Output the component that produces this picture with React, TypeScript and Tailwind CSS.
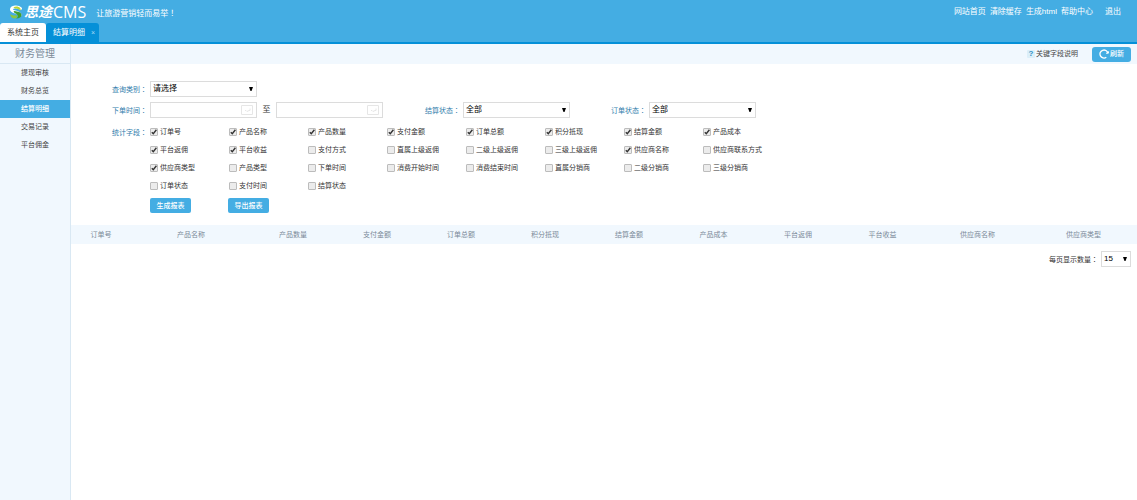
import { useState } from 'react'
import type { ReactNode } from 'react'

const topLinks = ['网站首页', '清除缓存', '生成html', '帮助中心']

const menu = ['提现审核', '财务总览', '结算明细', '交易记录', '平台佣金']

const fields: [string, boolean][] = [
    ['订单号', true],
    ['产品名称', true],
    ['产品数量', true],
    ['支付金额', true],
    ['订单总额', true],
    ['积分抵现', true],
    ['结算金额', true],
    ['产品成本', true],
    ['平台返佣', true],
    ['平台收益', true],
    ['支付方式', false],
    ['直属上级返佣', false],
    ['二级上级返佣', false],
    ['三级上级返佣', false],
    ['供应商名称', true],
    ['供应商联系方式', false],
    ['供应商类型', true],
    ['产品类型', false],
    ['下单时间', false],
    ['消费开始时间', false],
    ['消费结束时间', false],
    ['直属分销商', false],
    ['二级分销商', false],
    ['三级分销商', false],
    ['订单状态', false],
    ['支付时间', false],
    ['结算状态', false],
]

const columns: [string, string][] = [
    ['订单号', 'w-[60px]'],
    ['产品名称', 'w-[120px]'],
    ['产品数量', 'w-[84px]'],
    ['支付金额', 'w-[84px]'],
    ['订单总额', 'w-[84px]'],
    ['积分抵现', 'w-[84px]'],
    ['结算金额', 'w-[84px]'],
    ['产品成本', 'w-[85px]'],
    ['平台返佣', 'w-[84px]'],
    ['平台收益', 'w-[85px]'],
    ['供应商名称', 'w-[105px]'],
    ['供应商类型', 'w-[107px]'],
]

function Logo() {
    return (
        <svg viewBox="0 0 28 28" className="size-3.5" fill="none" strokeLinecap="round" aria-hidden="true">
            <path d="M23 7C18 2 5 3 5 9c0 6 16 4 17 11" stroke="#fff" strokeWidth="6" />
            <path d="M22 6c-3-4-10-4-13-1 2 3 9 1 14 6 1-2 0-4-1-5z" fill="#b9d433" />
            <path d="M11 12c6 1 14 2 14 8 0 4-4 7-11 7 5-3 5-6 1-9-4-2-8-5-4-6z" fill="#3f9f2f" />
            <path d="M2 18c4 3 9 4 13 2 2 3 1 6-3 7-5 0-9-3-10-9z" fill="#8dc73f" />
        </svg>
    )
}

// full-width punctuation centred in its box
function Mark({ children }: { children: ReactNode }) {
    return <span className="font-['Noto_Sans_CJK_TC',sans-serif]" lang="zh-TW">{children}</span>
}

function Select({ id, options, className }: { id: string; options: string[]; className: string }) {
    return (
        <span className={`grid items-center ${className}`}>
            <select
                id={id}
                className="col-start-1 row-start-1 h-4 w-full appearance-none border border-[#dcdcdc] bg-white pl-0.5 pr-3 text-[8px] leading-[14px] text-black outline-none"
            >
                {options.map((o) => (
                    <option key={o}>{o}</option>
                ))}
            </select>
            <svg viewBox="0 0 4 4" className="pointer-events-none col-start-1 row-start-1 mr-1 size-1 justify-self-end" aria-hidden="true">
                <path d="M0 0h4L2.500 4h-1z" fill="#000" />
            </svg>
        </span>
    )
}

function DateInput({ id, label }: { id: string; label: string }) {
    return (
        <span className="flex h-4 w-[107px] items-center border border-[#dcdcdc] bg-white pr-[3px]">
            <input id={id} type="text" aria-label={label} className="h-full w-0 min-w-0 flex-1 px-[3px] text-[8px] outline-none" />
            <svg viewBox="0 0 12 10" className="h-2.5 w-3" fill="none" stroke="#e6e6e6" aria-hidden="true">
                <path d="M.5.5h11v9H.5zM4 5.500h1l1 1 2-1h1v-2" />
            </svg>
        </span>
    )
}

function Field({ name, initial }: { name: string; initial: boolean }) {
    const [on, setOn] = useState(initial)

    return (
        <label className="flex h-[18px] items-center gap-0.5 whitespace-nowrap">
            <span className="grid size-2 place-items-center">
                <input
                    type="checkbox"
                    checked={on}
                    onChange={(e) => setOn(e.target.checked)}
                    className="col-start-1 row-start-1 size-2 appearance-none rounded-[1px] border border-[#bcbcbc] bg-[#ececec]"
                />
                {on && (
                    <svg viewBox="0 0 8 8" className="pointer-events-none col-start-1 row-start-1 size-2" aria-hidden="true">
                        <path d="M1.800 4.200l1.500 1.500L6.400 1.800" fill="none" stroke="#333" strokeWidth="1.400" />
                    </svg>
                )}
            </span>
            {name}
        </label>
    )
}

function RowLabel({ htmlFor, children }: { htmlFor: string; children: ReactNode }) {
    return (
        <label htmlFor={htmlFor} className="w-[38px] shrink-0 whitespace-nowrap text-[#2f7cab]">
            {children}<Mark>：</Mark>
        </label>
    )
}

export default function App() {
    return (
        <div className="flex min-h-screen flex-col bg-white font-['Liberation_Sans','Noto_Sans_CJK_SC',sans-serif] text-[7px] leading-[10px] text-[#333]">
            {/* top bar */}
            <header className="border-b-2 border-[#0590d8] bg-[#44ade3] text-white">
                <div className="flex h-[23px] items-center pl-[9px] pr-4">
                    <Logo />
                    <span className="ml-px text-[14px] font-bold italic leading-5">思途</span>
                    <span className="ml-px font-['Open_Sans',sans-serif] text-[16px] leading-5">CMS</span>
                    <span className="ml-2.5 mt-1 text-[8px]">让旅游营销轻而易举<Mark>！</Mark></span>
                    <nav className="ml-auto flex gap-1 text-[8px]">
                        {topLinks.map((l) => (
                            <a key={l} href="#">{l}</a>
                        ))}
                        <a href="#" className="ml-2">退出</a>
                    </nav>
                </div>
                <div className="flex h-[19px] text-[8px]">
                    <a href="#" className="flex items-center rounded-t-[3px] bg-white px-[7px] text-[#333]">系统主页</a>
                    <div className="flex items-center gap-1.5 rounded-t-[3px] bg-[#0590d8] pl-[7px] pr-1">
                        <a href="#">结算明细</a>
                        <button type="button" aria-label="关闭" className="text-[7px] text-[#a5d8f5]">×</button>
                    </div>
                </div>
            </header>

            <div className="flex flex-1">
                {/* sidebar */}
                <aside className="w-[71px] shrink-0 border-r border-[#d9e8f3] bg-[#f1f8fe]">
                    <h2 className="flex h-5 items-center justify-center border-b border-[#d9e8f3] text-[10px] text-[#7b8a99]">财务管理</h2>
                    <nav>
                        {menu.map((m) => (
                            <a
                                key={m}
                                href="#"
                                className={`flex h-[18px] items-center justify-center ${m === '结算明细' ? 'bg-[#44ade3] font-medium text-white' : 'text-[#444]'}`}
                            >
                                {m}
                            </a>
                        ))}
                    </nav>
                </aside>

                <main className="min-w-0 flex-1">
                    <div className="flex h-5 items-center justify-end gap-3.5 bg-[#f1f8fe] pr-1.5">
                        <a href="#" className="flex items-center gap-px text-[#444]">
                            <span className="flex size-2 items-center justify-center rounded-[1px] bg-[#dceff9] text-[8px] font-bold text-[#2f8fc4]">?</span>
                            关键字段说明
                        </a>
                        <button type="button" className="flex h-[15px] w-[39px] items-center justify-center gap-px rounded-[3px] bg-[#44ade3] font-medium text-white">
                            <svg viewBox="0 0 10 10" className="size-2.5" fill="none" stroke="#fff" strokeWidth="1.300" aria-hidden="true">
                                <path d="M8.900 4.200A4 4 0 1 0 7.300 8.300" />
                                <path d="M7 4.200h2.400V2.300" strokeWidth="1" />
                            </svg>
                            刷新
                        </button>
                    </div>

                    {/* filters */}
                    <form className="flex flex-col pb-3 pl-[41px] pt-[17px]" onSubmit={(e) => e.preventDefault()}>
                        <div className="flex items-center">
                            <RowLabel htmlFor="kind">查询类别</RowLabel>
                            <Select id="kind" options={['请选择']} className="w-[107px]" />
                        </div>
                        <div className="mt-[5px] flex items-center">
                            <RowLabel htmlFor="start">下单时间</RowLabel>
                            <DateInput id="start" label="开始时间" />
                            <span className="w-[19px] text-center text-[8px]">至</span>
                            <DateInput id="end" label="结束时间" />
                            <span className="ml-[42px] flex items-center">
                                <RowLabel htmlFor="settle">结算状态</RowLabel>
                                <Select id="settle" options={['全部']} className="w-[107px]" />
                            </span>
                            <span className="ml-[41px] flex items-center">
                                <RowLabel htmlFor="order">订单状态</RowLabel>
                                <Select id="order" options={['全部']} className="w-[107px]" />
                            </span>
                        </div>
                        <fieldset className="mt-[5px] flex" aria-labelledby="stat">
                            <span id="stat" className="w-[38px] shrink-0 whitespace-nowrap leading-[18px] text-[#2f7cab]">统计字段<Mark>：</Mark></span>
                            <div className="grid grid-cols-[repeat(8,79px)]">
                                {fields.map(([name, on]) => (
                                    <Field key={name} name={name} initial={on} />
                                ))}
                            </div>
                        </fieldset>
                        <div className="mt-[3px] flex gap-[37px] pl-[38px]">
                            <button type="submit" className="h-[15px] w-[41px] rounded-[2px] bg-[#44ade3] font-medium text-white">生成报表</button>
                            <button type="button" className="h-[15px] w-[41px] rounded-[2px] bg-[#44ade3] font-medium text-white">导出报表</button>
                        </div>
                    </form>

                    <table className="w-full table-fixed">
                        <thead>
                            <tr className="h-[19px] bg-[#f1f8fe] text-[#7b8a99]">
                                {columns.map(([name, width]) => (
                                    <th key={name} scope="col" className={`p-0 font-normal ${width}`}>{name}</th>
                                ))}
                            </tr>
                        </thead>
                    </table>

                    <div className="flex items-center justify-end gap-[3px] pr-1.5 pt-[7px]">
                        <label htmlFor="size">每页显示数量<Mark>：</Mark></label>
                        <Select id="size" options={['15', '30', '50']} className="w-[30px]" />
                    </div>
                </main>
            </div>
        </div>
    )
}
